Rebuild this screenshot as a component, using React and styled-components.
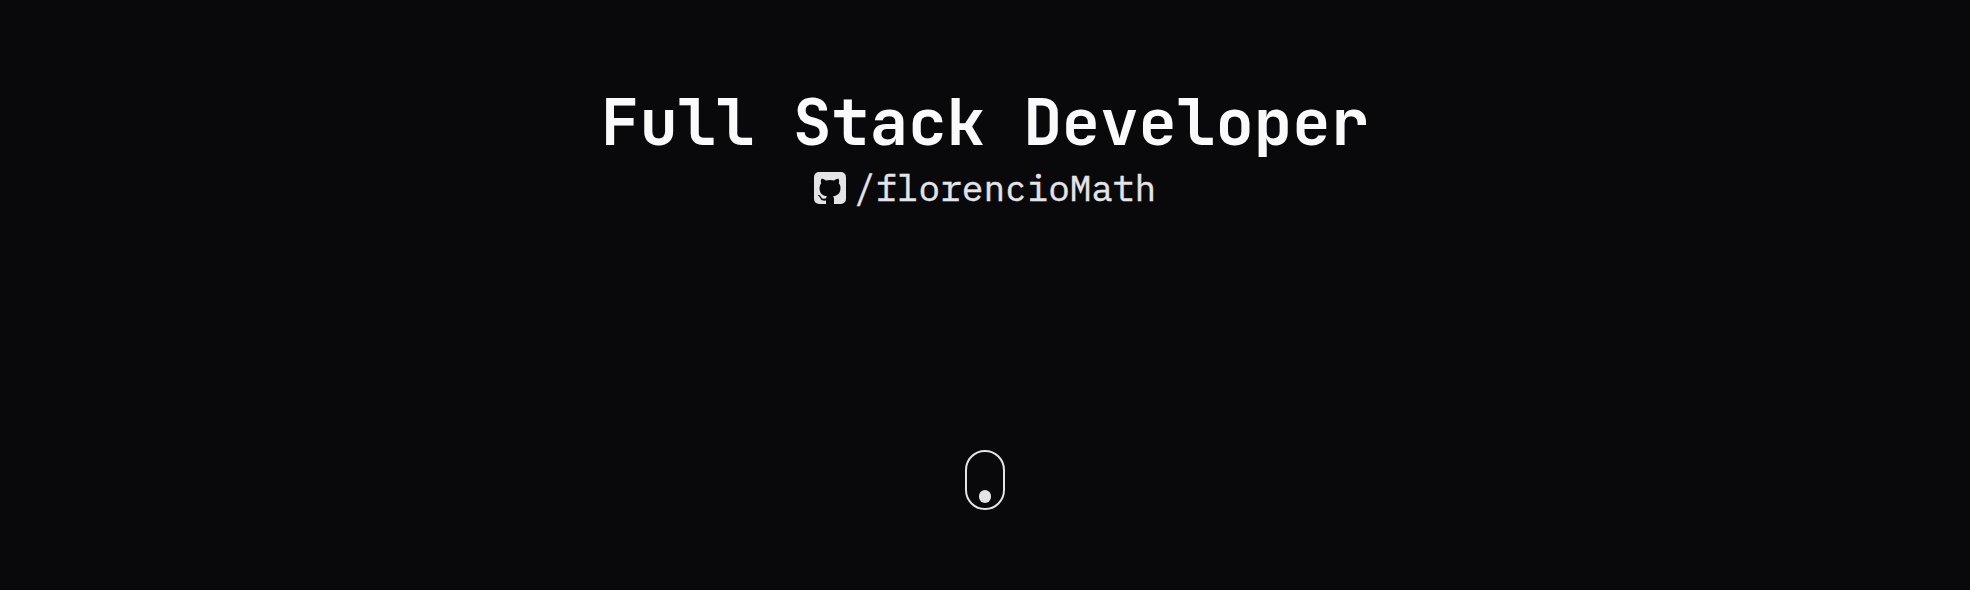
import React from "react";
import styled, { createGlobalStyle } from "styled-components";

const GlobalStyle = createGlobalStyle`
  * { box-sizing: border-box; }
  body { margin: 0; background: #09090b; }
`;

const Hero = styled.main`
  height: 590px;
  padding: 80px 0;
  display: flex;
  flex-direction: column;
  align-items: center;
  background: #09090b;
`;

const Title = styled.h1`
  margin: 0;
  height: 84px;
  line-height: 84px;
  font-family: "JetBrains Mono", "DejaVu Sans Mono", monospace;
  font-size: 64px;
  font-weight: 700;
  white-space: pre;
  color: #fafafa;
`;

const Profile = styled.a`
  display: flex;
  align-items: center;
  gap: 8px;
  height: 47px;
  color: #e4e4e7;
  text-decoration: none;
`;

const GithubMark = styled.svg`
  width: 32px;
  height: 32px;
  flex: none;
`;

const Handle = styled.span`
  font-family: "IBM Plex Mono", "Liberation Mono", monospace;
  font-size: 36px;
  font-weight: 400;
  line-height: 47px;
  -webkit-text-stroke: 0.4px currentColor;
`;

const ScrollHint = styled.div`
  margin-top: auto;
  display: flex;
  justify-content: center;
  align-items: flex-end;
  width: 40px;
  height: 60px;
  padding-bottom: 5.2px;
  border: 2px solid #e4e4e7;
  border-radius: 20px;
`;

const Dot = styled.span`
  width: 12.8px;
  height: 12.8px;
  border-radius: 50%;
  background: #e4e4e7;
`;

export default function App() {
  return (
    <>
      <GlobalStyle />
      <Hero>
        <Title>Full Stack Developer</Title>
        <Profile>
          <GithubMark viewBox="0 0 32 32" fill="currentColor">
            <path d="M5 0h22a5 5 0 0 1 5 5v22a5 5 0 0 1-5 5h-7v-4.6c0-1.6-.3-2.4-1.1-3.1 3.900-.4 7.600-2 7.600-8.500 0-1.900-.6-3.300-1.700-4.500.2-.5.8-2.300-.2-4.500 0 0-1.400-.4-4.500 1.700a16 16 0 0 0-8.200 0C8.800 6.400 7.400 6.800 7.400 6.800c-1 2.200-.4 4-.2 4.500a6.500 6.500 0 0 0-1.700 4.500c0 6.500 3.700 8.100 7.600 8.500-.5.5-.9 1.100-1 2-1 .5-3.500 1.200-5-1.400-.9-1.600-2.400-1.800-2.400-1.800-1.600 0-.1 1-.1 1 1 .5 1.800 2.400 1.800 2.400 1 2.900 5.600 2 5.600 2V32H5a5 5 0 0 1-5-5V5a5 5 0 0 1 5-5Z" />
          </GithubMark>
          <Handle>/florencioMath</Handle>
        </Profile>
        <ScrollHint>
          <Dot />
        </ScrollHint>
      </Hero>
    </>
  );
}
